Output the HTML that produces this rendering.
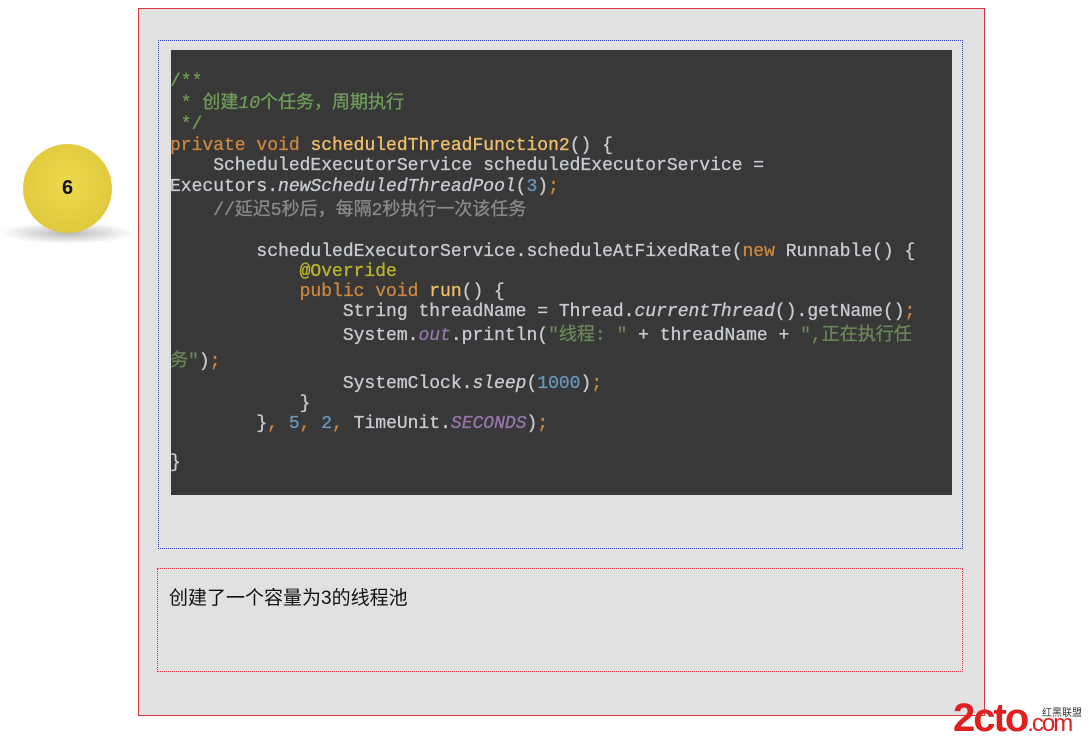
<!DOCTYPE html>
<html><head><meta charset="utf-8"><style>
body{margin:0;width:1090px;height:744px;background:#fff;position:relative;overflow:hidden;font-family:"Liberation Sans","Noto Sans CJK SC",sans-serif}
.outer{position:absolute;left:138px;top:8px;width:845px;height:706px;border:1px solid #d9393b;background:#e1e1e1}
.blue{position:absolute;left:158px;top:40px;width:803px;height:507px;border:1px dotted #2a3fc2}
.code{position:absolute;left:171px;top:50px;width:781px;height:445px;background:#383838}
.red{position:absolute;left:157px;top:568px;width:804px;height:102px;border:1px dotted #d9393b}
.l{position:absolute;left:170px;font:18px/20px "Liberation Mono","Noto Sans CJK SC",monospace;color:#c8ccd2;white-space:pre;-webkit-text-stroke:0.3px currentColor}
.c{color:#6f9b58}.k{color:#cc8640}.f{color:#f0c16a}.n{color:#6897bb}.a{color:#bbb529}.i{font-style:italic}.p{color:#9776aa;font-style:italic}.s{color:#6a8759}.g{color:#8a8a8a}
.shadow{position:absolute;left:0;top:222px;width:135px;height:22px;border-radius:50%;background:radial-gradient(ellipse at center,rgba(0,0,0,.28),rgba(0,0,0,0) 70%)}
.circle{position:absolute;left:23px;top:144px;width:89px;height:89px;border-radius:50%;background:radial-gradient(circle at 50% 45%,#edd94c,#dcc338);font:bold 20px "Liberation Sans",sans-serif;text-align:center;line-height:89px;color:#111}
</style></head><body>
<div class="shadow"></div>
<div class="circle">6</div>
<div class="outer"></div>
<div class="blue"></div>
<div class="code"></div>
<div class="l c" style="top:72px">/**</div>
<div class="l c" style="top:94px"> * 创建<i>10</i>个任务，周期执行</div>
<div class="l c" style="top:115px"> */</div>
<div class="l" style="top:136px"><span class="k">private void </span><span class="f">scheduledThreadFunction2</span>() {</div>
<div class="l" style="top:156px">    ScheduledExecutorService scheduledExecutorService =</div>
<div class="l" style="top:177px">Executors.<span class="i">newScheduledThreadPool</span>(<span class="n">3</span>)<span class="k">;</span></div>
<div class="l g" style="top:201px">    //延迟5秒后，每隔2秒执行一次该任务</div>
<div class="l" style="top:242px">        scheduledExecutorService.scheduleAtFixedRate(<span class="k">new </span>Runnable() {</div>
<div class="l a" style="top:262px">            @Override</div>
<div class="l" style="top:282px"><span class="k">            public void </span><span class="f">run</span>() {</div>
<div class="l" style="top:302px">                String threadName = Thread.<span class="i">currentThread</span>().getName()<span class="k">;</span></div>
<div class="l" style="top:326px">                System.<span class="p">out</span>.println(<span class="s">"线程: "</span> + threadName + <span class="s">",正在执行任</span></div>
<div class="l" style="top:352px"><span class="s">务"</span>)<span class="k">;</span></div>
<div class="l" style="top:374px">                SystemClock.<span class="i">sleep</span>(<span class="n">1000</span>)<span class="k">;</span></div>
<div class="l" style="top:394px">            }</div>
<div class="l" style="top:414px">        }<span class="k">, </span><span class="n">5</span><span class="k">, </span><span class="n">2</span><span class="k">, </span>TimeUnit.<span class="p">SECONDS</span>)<span class="k">;</span></div>
<div class="l" style="top:453px">}</div>
<div class="red"></div>
<div style="position:absolute;left:169px;top:583px;font-size:19px;color:#111">创建了一个容量为3的线程池</div>
<div style="position:absolute;left:953px;top:698px;font:bold 40px/40px 'Liberation Sans',sans-serif;color:#e02020;letter-spacing:-2px">2cto<span style="font-size:24px;font-weight:normal">.com</span></div>
<div style="position:absolute;left:1042px;top:704px;font-size:10px;color:#333">红黑联盟</div>
</body></html>
